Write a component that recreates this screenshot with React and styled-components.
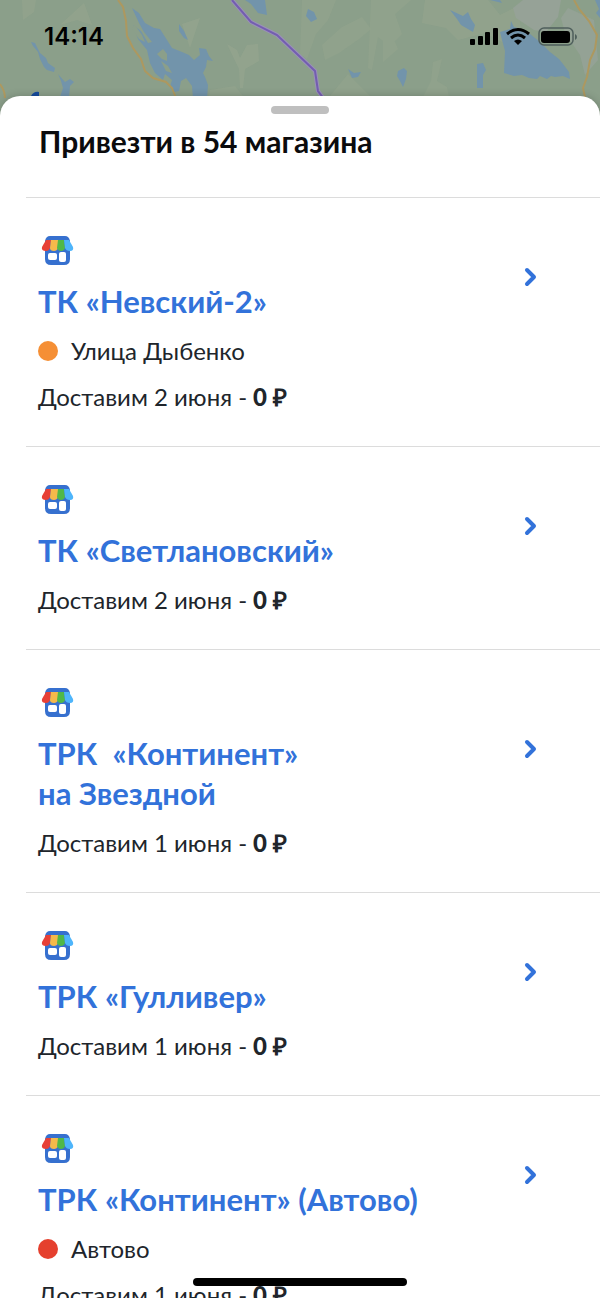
import React from "react";
import styled, { createGlobalStyle } from "styled-components";

const GlobalStyle = createGlobalStyle`
  * {
    box-sizing: border-box;
  }
  body {
    margin: 0;
    background: #ffffff;
    font-family: Lato, "Open Sans", sans-serif;
  }
`;

const Screen = styled.main`
  position: relative;
  width: 100%;
  height: 100vh;
  overflow: hidden;
  background: #8b9f8a;
`;

const MapSvg = styled.svg`
  position: absolute;
  top: 0;
  left: 0;
  width: 100%;
  height: 120px;
`;

const StatusBar = styled.header`
  position: relative;
  display: flex;
  justify-content: space-between;
  align-items: center;
  height: 96px;
  padding: 0 23px 22px 44px;
`;

const Clock = styled.time`
  font-family: Inter, sans-serif;
  font-size: 24px;
  font-weight: 600;
  line-height: 28px;
  color: #000000;
`;

const StatusIcons = styled.svg`
  width: 107px;
  height: 20px;
`;

const Sheet = styled.section`
  position: relative;
  min-height: 100%;
  background: #ffffff;
  border-radius: 20px 20px 0 0;
  box-shadow: 0 0 8px rgba(0, 0, 0, 0.2);
`;

const Handle = styled.div`
  position: absolute;
  top: 10px;
  left: calc(50% - 29px);
  width: 58px;
  height: 8px;
  border-radius: 4px;
  background: #bfbfbf;
`;

const Heading = styled.h1`
  margin: 0;
  padding: 25px 39px 36px;
  font-size: 30px;
  font-weight: 700;
  line-height: 40px;
  color: #0b0b0d;
`;

const List = styled.ul`
  margin: 0 0 0 26px;
  padding: 0;
  list-style: none;
`;

const Row = styled.li`
  border-top: 1px solid #dcdcdc;
`;

const RowLink = styled.a`
  display: block;
  padding: 34px 62px 31px 12px;
  color: #20252b;
  text-decoration: none;
`;

const Head = styled.div`
  display: flex;
  justify-content: space-between;
  align-items: center;
  margin-bottom: 12px;
`;

const HeadText = styled.div`
  max-width: 420px;
`;

const StoreSvg = styled.svg`
  display: block;
  width: 36px;
  height: 36px;
  margin-bottom: 13px;
`;

const Title = styled.h2`
  margin: 0;
  font-size: 31px;
  font-weight: 700;
  line-height: 40px;
  white-space: pre-wrap;
  color: #3272da;
`;

const Arrow = styled.svg`
  flex: none;
  width: 16px;
  height: 24px;
`;

const Line = styled.p`
  display: flex;
  align-items: center;
  margin: 0 0 10px;
  font-size: 24px;
  line-height: 36px;

  &:last-child {
    margin-bottom: 0;
  }
`;

const MetroDot = styled.i`
  width: 20px;
  height: 20px;
  margin-right: 13px;
  border-radius: 50%;
  background: ${(props) => props.$color};
`;

const Price = styled.b`
  margin-left: 6px;
  font-weight: 900;
`;

const HomeIndicator = styled.div`
  position: absolute;
  bottom: 12px;
  left: calc(50% - 107px);
  width: 214px;
  height: 8px;
  border-radius: 4px;
  background: #000000;
`;

const stores = [
  {
    name: "ТК «Невский-2»",
    metro: "Улица Дыбенко",
    color: "#f58f35",
    date: "2 июня",
  },
  { name: "ТК «Светлановский»", date: "2 июня" },
  { name: "ТРК  «Континент» на\u00a0Звездной", date: "1 июня" },
  { name: "ТРК «Гулливер»", date: "1 июня" },
  {
    name: "ТРК «Континент» (Автово)",
    metro: "Автово",
    color: "#e5402e",
    date: "1 июня",
  },
];

const MapBackground = () => (
  <MapSvg viewBox="0 0 600 120" preserveAspectRatio="xMidYMin slice" aria-hidden="true">
    <rect width="600" height="120" fill="#8b9f8a" />
    {/* fields */}
    <g fill="#96a58e">
      <path d="M22 0h14l-2 12-11 8z" opacity=".6" />
      <path d="M60 25l24-22 8 22-15-5z" opacity=".6" />
      <path d="M182 24l18-6-10 30zM227 44l10 6 3 8 7-13 11-1 1 17-14 8-2 19h-3l-1-19z" opacity=".7" />
      <path d="M302 0h34l-8 20-12 14-9 25-7-5zM322 45l20-18 20-10 9 12-12 10-20 14-14 7z" opacity=".5" />
      <path d="M371 0h40l-16 14 7 20-12 12-12-9-6 33-4-2zM383 38l9-3 6 14-15 13z" opacity=".5" />
      <path d="M433 62l9-3-5 22 10 6 2 10h-26l8-16zM348 74l22 22h-40zM210 90l25-4 8 10h-34z" opacity=".5" />
      <path d="M425 0h63l12 15 18-9 3 25 12 7-18 11-30-16-27 7-12-12-24-5z" opacity=".6" />
    </g>
    <g fill="#96a297">
      <path d="M523 0h38l-3 17-12 15-12-2-18-12-3-10z" />
      <path d="M568 8l26 12 4 40-13 15-5-20-15-22-4-15z" opacity=".8" />
    </g>
    {/* water */}
    <g fill="#7294ab">
      <path d="M31 42l4 1 5 10 6 5 2 5 7 5-1 4-7-2-3-3-4-8-2-7-5-6z" />
      <path d="M58 74l7 8 5-3 4 3-4 4-1 11h-9l3-9-2-7z" />
      <path d="M132 8l7 5 6 10 9 5 6 1 7 11 5 8 10 4 7 3 5 5 6-5-1-7 7 1 3 7 4 5-6-1-1 7-3 6 2 4 3 8-1 14h-14l-1-13-6-8-5 3-2 10-5 1-4-5 2-7-7-6-2 6-8-7-5-10-3-13-9-11-5-14 8 6 7 12 4-1-8-10-5-9z" />
      <path d="M179 24l5 7 4 9-4-2-5-7zM245 0h20l2 15-9-2-7-9z" />
      <path d="M308 9l6 3 3 7-6 3-5-6zM348 69l6 4 7-1-3 5-6 1zM398 71l6-3 3 3-1 8-3 8-3-6-3-5z" />
      <path d="M450 10l13 6 5-4 3 7 4 6-2 7-12-7-4-6zM477 64l6-1 3 7-3 5v13h-6v-10zM490 0h10l2 3zM595 0h5v18l-4-5 3-4z" />
      <path d="M500 32l10-3 1-8 3 6 11 3 15 12 10 10 9 7 4 5 6 8 1 7-7-3-8 1-4-1-4 3-7-3-3 3-8-1-7-3-8 1-10-3 1-22-3-11z" />
    </g>
    <path d="M163 49l4 5v7l-5-2-5-5z" fill="#8b9f8a" />
    <path d="M134 24l8 11 3 7-6-3-7-10zM161 61l7 5 4 7-6-2z" fill="#8b9f8a" />
    {/* roads */}
    <g fill="none" stroke="#ad985f" strokeWidth="2">
      <path d="M118 0l5 7 3 14 1 15 6 12 8 11 4 12 8 7 13 4 6 6 4 10" />
      <path d="M574 0l5 9 10 12 8 14-2 14-5 11-3 17-4 11 2 9M0 84q5 7 5 14" />
    </g>
    <path d="M232 0l19 22 26 13 38 36 3 20 6 8" fill="none" stroke="#9a90b9" strokeWidth="4" />
    <path d="M232 0l19 22 26 13 38 36 3 20 6 8" fill="none" stroke="#735db0" strokeWidth="2" />
    <path d="M31 96q3-5 8-4v6z" fill="#174b9d" />
  </MapSvg>
);

const StoreIcon = () => (
  <StoreSvg viewBox="0 0 36 36" aria-hidden="true">
    <path d="M12 4h15q4 0 5 5v18q0 6-6 6H13q-6 0-6-6V9q1-5 5-5z" fill="#3670cf" />
    <path d="M8 8h5l-1 8q-1 3-4 3-5 0-4-4z" fill="#e74036" />
    <path d="M13 8h7v8q-1 3-4 3-4 0-4-3z" fill="#f5b94b" />
    <path d="M20 8h6l1 8q-1 3-4 3t-4-3z" fill="#50b848" />
    <path d="M26 8h5l4 7q1 4-3 4-4 0-5-3z" fill="#4eb5fb" />
    <rect x="10" y="21" width="9" height="7" rx="2" fill="#ffffff" />
    <rect x="21" y="20" width="7" height="10" rx="2" fill="#ffffff" />
  </StoreSvg>
);

const Store = ({ store }) => (
  <Row>
    <RowLink href="#">
      <Head>
        <HeadText>
          <StoreIcon />
          <Title>{store.name}</Title>
        </HeadText>
        <Arrow viewBox="0 0 16 24" aria-hidden="true">
          <path
            d="M5 5l7 7-7 7"
            fill="none"
            stroke="#3272da"
            strokeWidth="4"
            strokeLinecap="round"
            strokeLinejoin="round"
          />
        </Arrow>
      </Head>
      {store.metro && (
        <Line>
          <MetroDot $color={store.color} />
          {store.metro}
        </Line>
      )}
      <Line>
        Доставим {store.date} - <Price>0 ₽</Price>
      </Line>
    </RowLink>
  </Row>
);

export default function App() {
  return (
    <>
      <GlobalStyle />
      <Screen>
        <MapBackground />
        <StatusBar>
          <Clock>14:14</Clock>
          <StatusIcons viewBox="0 0 107 20" aria-hidden="true">
            <rect x="0" y="12" width="5" height="6" rx="1" />
            <rect x="8" y="9" width="5" height="9" rx="1" />
            <rect x="15" y="5" width="5" height="13" rx="1" />
            <rect x="23" y="1" width="5" height="17" rx="1" />
            <g fill="none" stroke="#000000" strokeWidth="3">
              <path d="M37 7q11-9 22 0" />
              <path d="M41 11q7-6 14 0" />
            </g>
            <path d="M44 14q4-3 8 0l-4 4z" />
            <rect x="69" y="1" width="34" height="17" rx="5" fill="none" stroke="#4f5f5c" strokeWidth="1.5" />
            <rect x="71" y="4" width="29" height="12" rx="3" />
            <path d="M105 7q2 1 2 3t-2 3z" fill="#4f5f5c" />
          </StatusIcons>
        </StatusBar>
        <Sheet>
          <Handle />
          <Heading>Привезти в 54 магазина</Heading>
          <List>
            {stores.map((store) => (
              <Store key={store.name} store={store} />
            ))}
          </List>
        </Sheet>
        <HomeIndicator />
      </Screen>
    </>
  );
}
